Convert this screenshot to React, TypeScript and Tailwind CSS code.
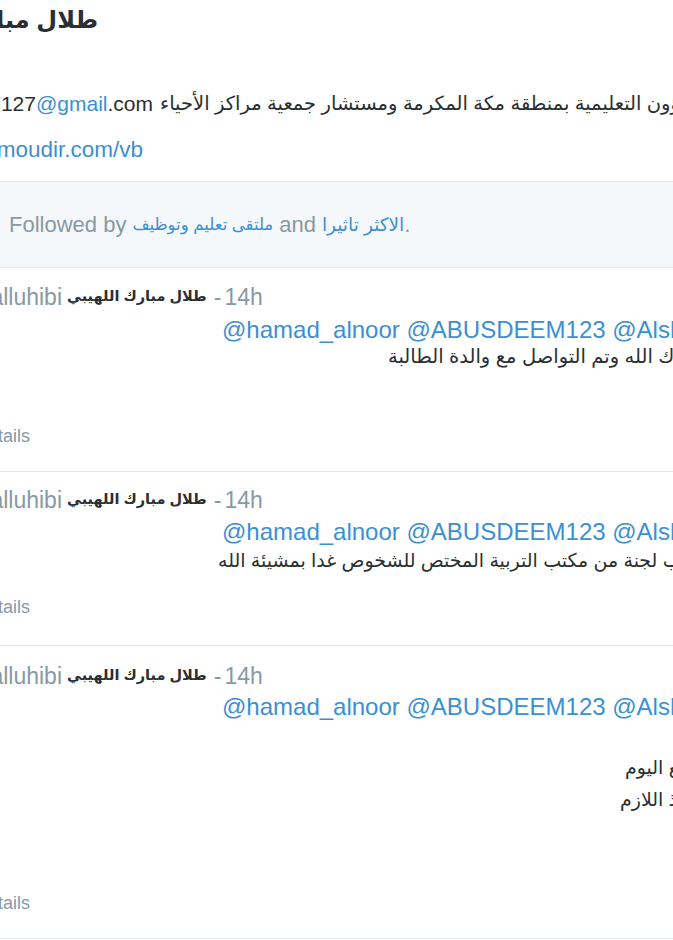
import React from "react";

const F = { fontFamily: '"Liberation Sans", "DejaVu Sans", Arial, sans-serif' };

function TweetHeader() {
  return (
    <div className="flex h-[24px] items-center whitespace-nowrap">
      <div className="flex w-[62px] shrink-0 justify-end text-[23px] text-[#8899a6]">
        <span>@Talalluhibi</span>
      </div>
      <span dir="rtl" className="ml-[5px] text-[14.5px] font-bold text-[#292f33]">طلال مبارك اللهيبي</span>
      <span className="ml-[7px] text-[23px] text-[#8899a6]">-</span>
      <span className="ml-[3px] text-[23px] text-[#8899a6]">14h</span>
    </div>
  );
}

function Mentions() {
  return (
    <div className="flex h-[28px] items-center whitespace-nowrap pl-[222px] text-[24px] text-[#3b8fd4]">
      @hamad_alnoor @ABUSDEEM123 @Alshehri
    </div>
  );
}

function Tails() {
  return (
    <div className="flex h-[24px] items-center whitespace-nowrap">
      <div className="flex w-[30px] shrink-0 justify-end text-[18px] text-[#8899a6]">
        <span>Details</span>
      </div>
    </div>
  );
}

export default function App() {
  return (
    <div className="h-[940px] w-[673px] overflow-hidden bg-white text-[#292f33]" style={F}>
      {/* profile header */}
      <div className="flex h-[40px] items-center whitespace-nowrap">
        <div dir="rtl" className="w-[98px] text-[24px] font-bold text-[#292f33]">طلال مبارك اللهيبي</div>
      </div>
      <div className="mt-[52px] flex h-[24px] items-center whitespace-nowrap">
        <div className="flex w-[153px] shrink-0 justify-end text-[21px]">
          <span>talal127<span className="text-[#3b8fd4]">@gmail</span>.com</span>
        </div>
        <span dir="rtl" className="ml-[7px] text-[19.5px]">مدير الشؤون التعليمية بمنطقة مكة المكرمة ومستشار جمعية مراكز الأحياء</span>
      </div>
      <div className="mt-[22px] flex h-[24px] items-center whitespace-nowrap">
        <div className="flex w-[143px] shrink-0 justify-end text-[22.5px] text-[#3b8fd4]">
          <span>almoudir.com/vb</span>
        </div>
      </div>

      {/* followed by */}
      <div className="mt-[19px] flex h-[87px] items-center whitespace-nowrap border-y border-[#e1e8ed] bg-[#f5f8fa] pl-[9px] text-[22px] text-[#8899a6]">
        <span>Followed by</span>
        <span dir="rtl" className="ml-[6px] text-[16.5px] text-[#3b8fd4]">ملتقى تعليم وتوظيف</span>
        <span className="ml-[6px]">and</span>
        <span dir="rtl" className="ml-[6px] text-[18.5px] text-[#3b8fd4]">الاكثر تاثيرا</span>
        <span>.</span>
      </div>

      {/* tweet 1 */}
      <div className="border-b border-[#e1e8ed] pt-[17px] pb-[23px]">
        <TweetHeader />
        <div className="mt-[7px]">
          <Mentions />
        </div>
        <div className="mt-[1px] flex h-[24px] items-center whitespace-nowrap pl-[388px]">
          <span dir="rtl" className="text-[19.5px]">شكرا بارك الله وتم التواصل مع والدة الطالبة</span>
        </div>
        <div className="mt-[55px]">
          <Tails />
        </div>
      </div>

      {/* tweet 2 */}
      <div className="border-b border-[#e1e8ed] pt-[16px] pb-[26px]">
        <TweetHeader />
        <div className="mt-[6px]">
          <Mentions />
        </div>
        <div className="mt-[3px] flex h-[24px] items-center whitespace-nowrap pl-[218px]">
          <span dir="rtl" className="text-[19px]">وتم طلب لجنة من مكتب التربية المختص للشخوص غدا بمشيئة الله</span>
        </div>
        <div className="mt-[22px]">
          <Tails />
        </div>
      </div>

      {/* tweet 3 */}
      <div className="border-b border-[#e1e8ed] pt-[18px] pb-[23px]">
        <TweetHeader />
        <div className="mt-[5px]">
          <Mentions />
        </div>
        <div className="mt-[35px] flex h-[24px] items-center whitespace-nowrap pl-[625px]">
          <span dir="rtl" className="text-[19px]">تمت الزيارة للطالبة في المدرسة مع اليوم</span>
        </div>
        <div className="mt-[8px] flex h-[24px] items-center whitespace-nowrap pl-[620px]">
          <span dir="rtl" className="text-[19px]">وسيتم اتخاذ اللازم</span>
        </div>
        <div className="mt-[79px]">
          <Tails />
        </div>
      </div>
    </div>
  );
}
